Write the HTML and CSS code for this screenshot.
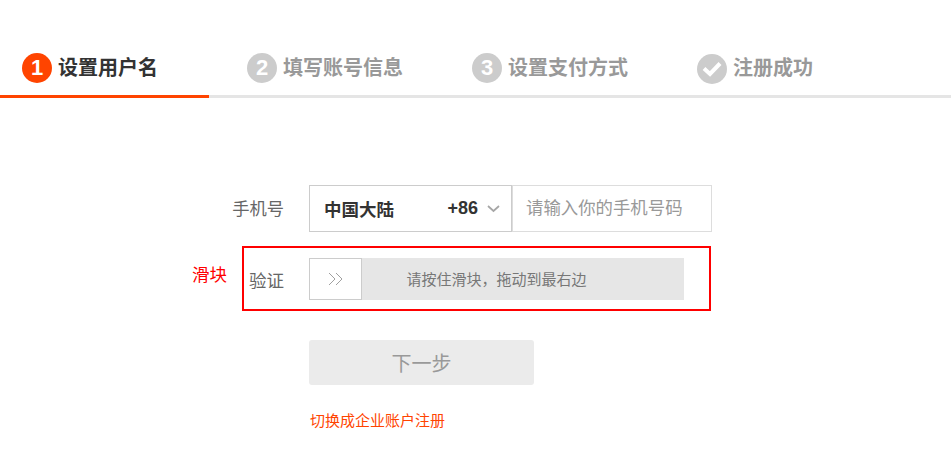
FILE: index.html
```html
<!DOCTYPE html>
<html>
  <head>
    <title>注册</title>
    <link rel="stylesheet" href="styles.css">
  </head>
  <body>
    <div class="steps">
      <div class="step active">
        <span class="step-icon">1</span>
        <span class="step-title">设置用户名</span>
      </div>
      <div class="step">
        <span class="step-icon">2</span>
        <span class="step-title">填写账号信息</span>
      </div>
      <div class="step">
        <span class="step-icon">3</span>
        <span class="step-title">设置支付方式</span>
      </div>
      <div class="step">
        <span class="step-icon done">
          <svg width="20" height="16" viewBox="0 0 20 16" fill="none" stroke="#ffffff" stroke-width="4">
            <path d="M2 7.5l6 5.5L18 2.5"></path>
          </svg>
        </span>
        <span class="step-title">注册成功</span>
      </div>
    </div>

    <div class="form">
      <div class="phone-row">
        <label class="phone-label" for="phone">手机号</label>
        <div class="region">
          <span class="region-name">中国大陆</span>
          <span class="region-code">+86</span>
          <svg width="13" height="8" viewBox="0 0 13 8" fill="none" stroke="#a6a6a6" stroke-width="1.7">
            <path d="M1 1l5.5 5L12 1"></path>
          </svg>
        </div>
        <input class="phone-input" id="phone" type="text" placeholder="请输入你的手机号码">
      </div>

      <div class="slider-row">
        <span class="slider-note">滑块</span>
        <div class="slider-box">
          <span class="slider-label">验证</span>
          <div class="slider-track">
            <span class="slider-knob">
              <svg width="16" height="14" viewBox="0 0 16 14" fill="none" stroke="#a0a0a0" stroke-width="1">
                <path d="M1 1l6 6-6 6"></path>
                <path d="M8 1l6 6-6 6"></path>
              </svg>
            </span>
            <span class="slider-text">请按住滑块，拖动到最右边</span>
          </div>
        </div>
      </div>

      <button class="next-btn" disabled>下一步</button>
      <a class="switch-link" href="#">切换成企业账户注册</a>
    </div>
  </body>
</html>
```

FILE: styles.css
```css
* {
  box-sizing: border-box;
}
body {
  margin: 0;
  background-color: #ffffff;
  font-family: "Liberation Sans", "Noto Sans CJK SC", sans-serif;
  color: #333333;
}
.steps {
  display: flex;
  margin-top: 53px;
  height: 45px;
  border-bottom: 3px solid #e5e5e5;
}
.step {
  display: flex;
  align-items: flex-start;
  gap: 6px;
  width: 225px;
  height: 45px;
  padding-left: 22px;
  flex-shrink: 0;
}
.step.active {
  width: 209px;
  margin-right: 16px;
  border-bottom: 3px solid #ff4400;
}
.step-icon {
  display: flex;
  align-items: center;
  justify-content: center;
  width: 30px;
  height: 30px;
  border-radius: 50%;
  background-color: #cccccc;
  color: #ffffff;
  font-size: 22px;
  font-weight: 700;
}
.step-icon.done {
  margin-top: 1px;
}
.step.active .step-icon {
  background-color: #ff4400;
}
.step-title {
  font-size: 20px;
  font-weight: 700;
  line-height: 31px;
  color: #999999;
}
.step.active .step-title {
  color: #333333;
}
.form {
  display: flex;
  flex-direction: column;
  align-items: flex-start;
  padding: 87px 0 0 192px;
}
.phone-row {
  display: flex;
  align-items: center;
}
.phone-label {
  width: 92px;
  margin-right: 25px;
  margin-top: -2px;
  text-align: right;
  font-size: 17.3px;
  color: #666666;
}
.region {
  display: flex;
  align-items: center;
  width: 203px;
  height: 47px;
  padding: 0 11px 0 14px;
  border: 1px solid #cccccc;
  font-size: 17.5px;
  font-weight: 700;
}
.region-name {
  flex: 1;
}
.region-code {
  margin-right: 9px;
  font-size: 18px;
}
.phone-input {
  width: 200px;
  height: 47px;
  padding: 0 13px;
  border: 1px solid #dddddd;
  font-family: inherit;
  font-size: 17.4px;
}
.phone-input::placeholder {
  color: #999999;
}
.slider-row {
  display: flex;
  align-items: center;
  margin-top: 14px;
}
.slider-note {
  width: 50px;
  margin-top: -10px;
  font-size: 17.5px;
  color: #ff0000;
}
.slider-box {
  display: flex;
  align-items: center;
  width: 469px;
  height: 65px;
  padding-left: 5px;
  border: 2px solid #ff0000;
}
.slider-label {
  width: 60px;
  padding-top: 1px;
  font-size: 17.5px;
  color: #666666;
}
.slider-track {
  position: relative;
  display: flex;
  align-items: center;
  justify-content: center;
  width: 375px;
  height: 42px;
  background-color: #e6e6e6;
}
.slider-knob {
  position: absolute;
  left: 0;
  top: 0;
  display: flex;
  align-items: center;
  justify-content: center;
  width: 53px;
  height: 42px;
  background-color: #ffffff;
  border: 1px solid #cccccc;
}
.slider-text {
  font-size: 15px;
  color: #777777;
}
.next-btn {
  width: 225px;
  height: 45px;
  margin: 29px 0 0 117px;
  border: none;
  border-radius: 3px;
  background-color: #ebebeb;
  font-family: inherit;
  font-size: 20px;
  color: #999999;
}
.switch-link {
  margin: 24px 0 0 118px;
  font-size: 15px;
  color: #ff4400;
  text-decoration: none;
}
```
